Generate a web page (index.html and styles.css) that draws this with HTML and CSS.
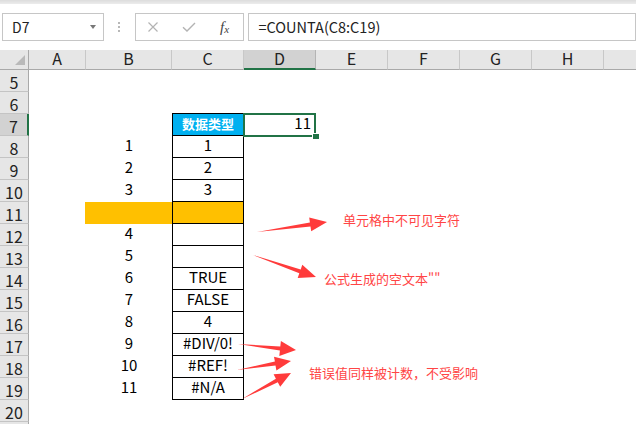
FILE: index.html
```html
<!DOCTYPE html>
<html lang="zh-CN">
<head>
<meta charset="utf-8">
<title>COUNTA</title>
<link rel="stylesheet" href="styles.css">
</head>
<body>
<div class="app">
  <div class="strip"></div>
  <div class="fbar">
    <div class="namebox"><span>D7</span><span class="dd"></span></div>
    <div class="sep"><i></i><i></i><i></i></div>
    <div class="btnbox">
      <span class="btn"><svg width="12" height="10" viewBox="0 0 12 10"><path d="M1.5 0.5 L10.5 9.5 M10.5 0.5 L1.5 9.5" stroke="#b3b3b3" stroke-width="1.2" fill="none"/></svg></span>
      <span class="btn"><svg width="14" height="10" viewBox="0 0 14 10"><path d="M1 5.2 L5 9 L13 1" stroke="#b3b3b3" stroke-width="1.4" fill="none"/></svg></span>
      <span class="btn fx"><i class="f">f</i><i class="x">x</i></span>
    </div>
    <div class="formula">=COUNTA(C8:C19)</div>
  </div>
  <div class="sheet">
    <div class="hrow">
      <div class="corner"><span class="tri"></span></div>
      <div class="ch">A</div>
      <div class="ch">B</div>
      <div class="ch">C</div>
      <div class="ch sel">D</div>
      <div class="ch">E</div>
      <div class="ch">F</div>
      <div class="ch">G</div>
      <div class="ch">H</div>
      <div class="ch last"></div>
    </div>
    <div class="row"><div class="rh">5</div><div></div><div class="b"></div><div class="c"></div><div class="d"></div><div></div></div>
    <div class="row"><div class="rh">6</div><div></div><div class="b"></div><div class="c top"></div><div class="d"></div><div></div></div>
    <div class="row"><div class="rh sel">7</div><div></div><div class="b"></div><div class="c t hd">数据类型</div><div class="d cur">11<span class="selbox"></span><span class="handle"></span></div><div></div></div>
    <div class="row"><div class="rh">8</div><div></div><div class="b">1</div><div class="c t">1</div><div class="d"></div><div></div></div>
    <div class="row"><div class="rh">9</div><div></div><div class="b">2</div><div class="c t">2</div><div class="d"></div><div></div></div>
    <div class="row"><div class="rh">10</div><div></div><div class="b">3</div><div class="c t">3</div><div class="d"></div><div></div></div>
    <div class="row"><div class="rh">11</div><div class="a-or"></div><div class="b or"></div><div class="c t or"></div><div class="d"></div><div></div></div>
    <div class="row"><div class="rh">12</div><div></div><div class="b">4</div><div class="c t"></div><div class="d"></div><div></div></div>
    <div class="row"><div class="rh">13</div><div></div><div class="b">5</div><div class="c t"></div><div class="d"></div><div></div></div>
    <div class="row"><div class="rh">14</div><div></div><div class="b">6</div><div class="c t">TRUE</div><div class="d"></div><div></div></div>
    <div class="row"><div class="rh">15</div><div></div><div class="b">7</div><div class="c t">FALSE</div><div class="d"></div><div></div></div>
    <div class="row"><div class="rh">16</div><div></div><div class="b">8</div><div class="c t">4</div><div class="d"></div><div></div></div>
    <div class="row"><div class="rh">17</div><div></div><div class="b">9</div><div class="c t">#DIV/0!</div><div class="d"></div><div></div></div>
    <div class="row"><div class="rh">18</div><div></div><div class="b">10</div><div class="c t">#REF!</div><div class="d"></div><div></div></div>
    <div class="row"><div class="rh">19</div><div></div><div class="b">11</div><div class="c t">#N/A</div><div class="d"></div><div></div></div>
    <div class="row"><div class="rh">20</div><div></div><div class="b"></div><div class="c"></div><div class="d"></div><div></div></div>
    <div class="row"><div class="rh"></div><div></div><div class="b"></div><div class="c"></div><div class="d"></div><div></div></div>
  </div>

  <svg class="arrows" width="636" height="424" viewBox="0 0 636 424">
    <g fill="#ff3b3b">
      <polygon points="257,232 310.5,226.4 311.2,231.3 327,222 309.2,217.5 309.9,222.4"/>
      <polygon points="253,255 300.7,269.5 302.3,264.8 316,277 297.7,278 299.3,273.3"/>
      <polygon points="238,344 280.3,346.4 280.9,340.9 296,350 279.3,355.9 279.9,350.4"/>
      <polygon points="237,370 274.9,361.6 274,356.7 291,361 276.4,370.5 275.5,365.6"/>
      <polygon points="242,399 275.9,378.7 273.6,374.3 291,373 280.2,386.7 277.8,382.3"/>
    </g>
  </svg>
  <div class="note n1">单元格中不可见字符</div>
  <div class="note n2">公式生成的空文本""</div>
  <div class="note n3">错误值同样被计数，不受影响</div>
</div>
</body>
</html>
```
FILE: styles.css
```css
html, body {
  margin: 0;
  padding: 0;
}
body {
  width: 636px;
  height: 424px;
  overflow: hidden;
  background: #ffffff;
  font-family: "Noto Sans CJK SC", "Liberation Sans", sans-serif;
  color: #000;
}
.app {
  position: relative;
  width: 636px;
  height: 424px;
  overflow: hidden;
}
.strip {
  height: 4px;
  background: linear-gradient(#dcdcdc, #ececec);
}
.fbar {
  height: 46px;
  box-sizing: border-box;
  padding-top: 9px;
  display: flex;
  align-items: flex-start;
  background: #ffffff;
}
.namebox {
  margin-left: 2px;
  width: 105px;
  height: 28px;
  box-sizing: border-box;
  border: 1px solid #c6c6c6;
  display: flex;
  align-items: center;
  justify-content: space-between;
  padding: 0 7px 0 9px;
  font-size: 14px;
  color: #222;
}
.dd {
  width: 0;
  height: 0;
  border-left: 3.5px solid transparent;
  border-right: 3.5px solid transparent;
  border-top: 4px solid #777;
}
.sep {
  width: 31px;
  height: 28px;
  display: flex;
  flex-direction: column;
  align-items: center;
  justify-content: center;
  gap: 2px;
}
.sep i {
  width: 2px;
  height: 2px;
  background: #b8b8b8;
}
.btnbox {
  width: 109px;
  height: 28px;
  box-sizing: border-box;
  border: 1px solid #c6c6c6;
  display: flex;
  align-items: center;
}
.btn {
  width: 36px;
  display: flex;
  justify-content: center;
  align-items: center;
}
.btnbox .btn:first-child {
  margin-left: -1px;
}
.fx {
  font-family: "Liberation Serif", serif;
  color: #444;
}
.fx .f {
  font-size: 15px;
  font-style: italic;
}
.fx .x {
  font-size: 11px;
  font-style: italic;
  margin-top: 3px;
}
.formula {
  margin-left: 4px;
  width: 400px;
  height: 28px;
  box-sizing: border-box;
  border: 1px solid #c6c6c6;
  padding-left: 10px;
  font-size: 14.5px;
  line-height: 25px;
  color: #222;
}
.sheet {
  display: flex;
  flex-direction: column;
}
.hrow {
  display: grid;
  grid-template-columns: 29px 57px 86px 72px 72px 72px 72px 72px 72px 1fr;
  height: 20px;
  background: #e6e6e6;
}
.corner {
  position: relative;
  border-right: 1px solid #a9a9a9;
  border-bottom: 1px solid #a9a9a9;
}
.tri {
  position: absolute;
  left: 15px;
  top: 5px;
  width: 0;
  height: 0;
  border-left: 10px solid transparent;
  border-bottom: 10px solid #b9b9b9;
}
.ch {
  border-right: 1px solid #c8c8c8;
  border-bottom: 1px solid #a9a9a9;
  text-align: center;
  font-size: 16px;
  line-height: 17px;
  color: #222;
}
.ch.sel {
  background: #d2d2d2;
  border-bottom: 2px solid #217346;
  border-right-color: #b4b4b4;
}
.ch.last {
  border-right: none;
}
.row {
  display: grid;
  grid-template-columns: 29px 57px 86px 72px 72px 1fr;
  height: 22px;
  flex: none;
}
.rh {
  box-sizing: border-box;
  height: 22px;
  padding-top: 3px;
  background: #e6e6e6;
  border-right: 1px solid #a9a9a9;
  border-bottom: 1px solid #c4c4c4;
  text-align: center;
  font-size: 16px;
  line-height: 18px;
  color: #222;
}
.rh.sel {
  background: #d2d2d2;
  border-right: 2px solid #217346;
}
.b, .c, .d {
  font-size: 15px;
  line-height: 17px;
  text-align: center;
  box-sizing: border-box;
}
.c.top {
  border-bottom: 1px solid #000;
}
.c.t {
  border-left: 1px solid #000;
  border-right: 1px solid #000;
  border-bottom: 1px solid #000;
}
.c.hd {
  background: #00b0f0;
  color: #fff;
  font-weight: bold;
  font-size: 13px;
  line-height: 20px;
}
.or {
  background: #ffc000;
}
.a-or {
  border-right: 1px solid #ffc000;
}
.d.cur {
  position: relative;
  text-align: right;
  padding-right: 5px;
}
.selbox {
  position: absolute;
  left: -1px;
  top: -1px;
  width: 73px;
  height: 24px;
  box-sizing: border-box;
  border: 2px solid #217346;
}
.handle {
  position: absolute;
  left: 68px;
  top: 19px;
  width: 7px;
  height: 6px;
  box-sizing: border-box;
  background: #217346;
  border-left: 1px solid #fff;
  border-top: 1px solid #fff;
}
.arrows {
  position: absolute;
  left: 0;
  top: 0;
  pointer-events: none;
}
.note {
  position: absolute;
  font-size: 13px;
  line-height: 18px;
  color: #ff4545;
  white-space: nowrap;
}
.n1 {
  left: 343px;
  top: 211px;
}
.n2 {
  left: 324px;
  top: 270px;
}
.n3 {
  left: 309px;
  top: 364px;
}
```
